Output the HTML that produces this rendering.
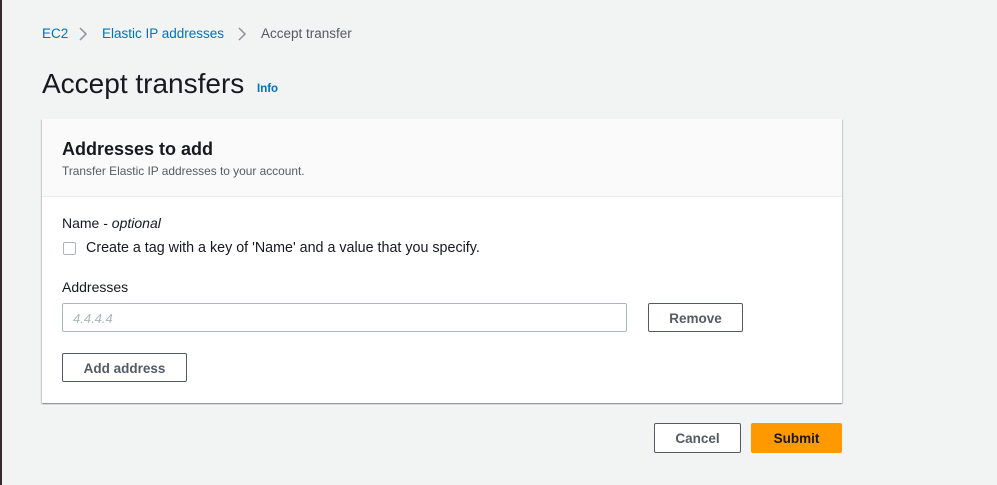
<!DOCTYPE html>
<html><head><meta charset="utf-8"><style>
*{box-sizing:border-box;margin:0;padding:0}
body{width:997px;height:485px;background:#f2f3f3;font-family:"Liberation Sans",sans-serif;color:#16191f;position:relative;overflow:hidden}
.edge{position:absolute;left:0;top:0;width:2px;height:485px;background:#3a2a30}
.a{position:absolute;white-space:nowrap}
.card{position:absolute;left:42px;top:119px;width:800px;height:284px;background:#fff;box-shadow:0 1px 1px rgba(0,28,36,.3),1px 1px 1px rgba(0,28,36,.15),-1px 1px 1px rgba(0,28,36,.15)}
.hd{position:absolute;left:0;top:0;width:800px;height:78px;background:#fafafa;border-bottom:1px solid #eaeded}
.btn{position:absolute;border:1px solid #545b64;border-radius:2px;background:#fff;color:#545b64;font-weight:bold;font-size:13.5px;text-align:center}
</style></head><body>
<div class="edge"></div>
<div class="a" style="left:42px;top:26px;font-size:13.5px;color:#0073bb">EC2</div>
<svg class="a" style="left:78px;top:27px" width="10" height="14"><path d="M2 1 L8 7 L2 13" stroke="#879596" stroke-width="1.5" fill="none"/></svg>
<div class="a" style="left:102px;top:26px;font-size:13.5px;color:#0073bb">Elastic IP addresses</div>
<svg class="a" style="left:237px;top:27px" width="10" height="14"><path d="M2 1 L8 7 L2 13" stroke="#879596" stroke-width="1.5" fill="none"/></svg>
<div class="a" style="left:261px;top:26px;font-size:13.5px;color:#545b64">Accept transfer</div>
<div class="a" style="left:42px;top:68px;font-size:28px;color:#16191f">Accept transfers</div>
<div class="a" style="left:257px;top:83px;font-size:11.5px;font-weight:bold;color:#0073bb">Info</div>
<div class="card">
<div class="hd"></div>
<div class="a" style="left:20px;top:20px;font-size:18px;font-weight:bold">Addresses to add</div>
<div class="a" style="left:20px;top:45px;font-size:11.9px;color:#545b64">Transfer Elastic IP addresses to your account.</div>
<div class="a" style="left:20px;top:96px;font-size:14px">Name - <i>optional</i></div>
<div class="a" style="left:21px;top:123px;width:13px;height:13px;border:1px solid #aab7b8;border-radius:2px"></div>
<div class="a" style="left:44px;top:121px;font-size:14.3px">Create a tag with a key of 'Name' and a value that you specify.</div>
<div class="a" style="left:20px;top:160px;font-size:14px">Addresses</div>
<div class="a" style="left:20px;top:184px;width:565px;height:29px;border:1px solid #aab7b8;border-radius:2px;font-size:13px;font-style:italic;color:#aab7b8;padding:7px 0 0 10px">4.4.4.4</div>
<div class="btn" style="left:606px;top:184px;width:95px;height:29px;padding-top:7px">Remove</div>
<div class="btn" style="left:20px;top:234px;width:125px;height:29px;padding-top:7px">Add address</div>
</div>
<div class="btn" style="left:654px;top:423px;width:87px;height:30px;padding-top:7px">Cancel</div>
<div class="btn" style="left:751px;top:423px;width:91px;height:30px;padding-top:7px;background:#ff9900;border-color:#ff9900;color:#16191f">Submit</div>
</body></html>
